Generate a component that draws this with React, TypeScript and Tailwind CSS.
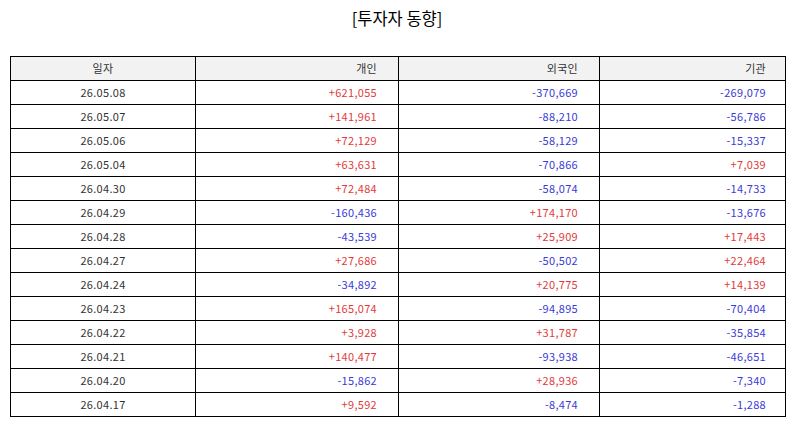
const rows: [string, string, string, string][] = [
  ["26.05.08", "+621,055", "-370,669", "-269,079"],
  ["26.05.07", "+141,961", "-88,210", "-56,786"],
  ["26.05.06", "+72,129", "-58,129", "-15,337"],
  ["26.05.04", "+63,631", "-70,866", "+7,039"],
  ["26.04.30", "+72,484", "-58,074", "-14,733"],
  ["26.04.29", "-160,436", "+174,170", "-13,676"],
  ["26.04.28", "-43,539", "+25,909", "+17,443"],
  ["26.04.27", "+27,686", "-50,502", "+22,464"],
  ["26.04.24", "-34,892", "+20,775", "+14,139"],
  ["26.04.23", "+165,074", "-94,895", "-70,404"],
  ["26.04.22", "+3,928", "+31,787", "-35,854"],
  ["26.04.21", "+140,477", "-93,938", "-46,651"],
  ["26.04.20", "-15,862", "+28,936", "-7,340"],
  ["26.04.17", "+9,592", "-8,474", "-1,288"],
];

// 음수는 파랑, 양수는 빨강
function tone(v: string) {
  return v.startsWith("-") ? "text-[#3a3ad6]" : "text-[#e23a3a]";
}

export default function App() {
  return (
    <div className="w-[794px] h-[425px] bg-white font-['Noto_Sans_CJK_KR','Noto_Sans',sans-serif] text-[#333]">
      <h1 className="pt-[5px] text-center text-[16.5px] leading-[26px] text-black">[투자자 동향]</h1>
      <table className="ml-[10px] mt-[25px] w-[775px] border-collapse text-[11px] tracking-[0.3px] table-fixed">
        <colgroup>
          <col className="w-[185px]" />
          <col className="w-[203px]" />
          <col className="w-[201px]" />
          <col className="w-[186px]" />
        </colgroup>
        <thead>
          <tr className="h-[24px] bg-[#f2f2f2]">
            <th className="border-[1.5px] border-black font-normal text-center">일자</th>
            <th className="border-[1.5px] border-black font-normal text-right pr-[21px]">개인</th>
            <th className="border-[1.5px] border-black font-normal text-right pr-[21px]">외국인</th>
            <th className="border-[1.5px] border-black font-normal text-right pr-[19px]">기관</th>
          </tr>
        </thead>
        <tbody>
          {rows.map((r) => (
            <tr key={r[0]} className="h-[24px]">
              <td className="border-[1.5px] border-black text-center">{r[0]}</td>
              <td className={`border-[1.5px] border-black text-right pr-[21px] ${tone(r[1])}`}>{r[1]}</td>
              <td className={`border-[1.5px] border-black text-right pr-[21px] ${tone(r[2])}`}>{r[2]}</td>
              <td className={`border-[1.5px] border-black text-right pr-[19px] ${tone(r[3])}`}>{r[3]}</td>
            </tr>
          ))}
        </tbody>
      </table>
    </div>
  );
}
